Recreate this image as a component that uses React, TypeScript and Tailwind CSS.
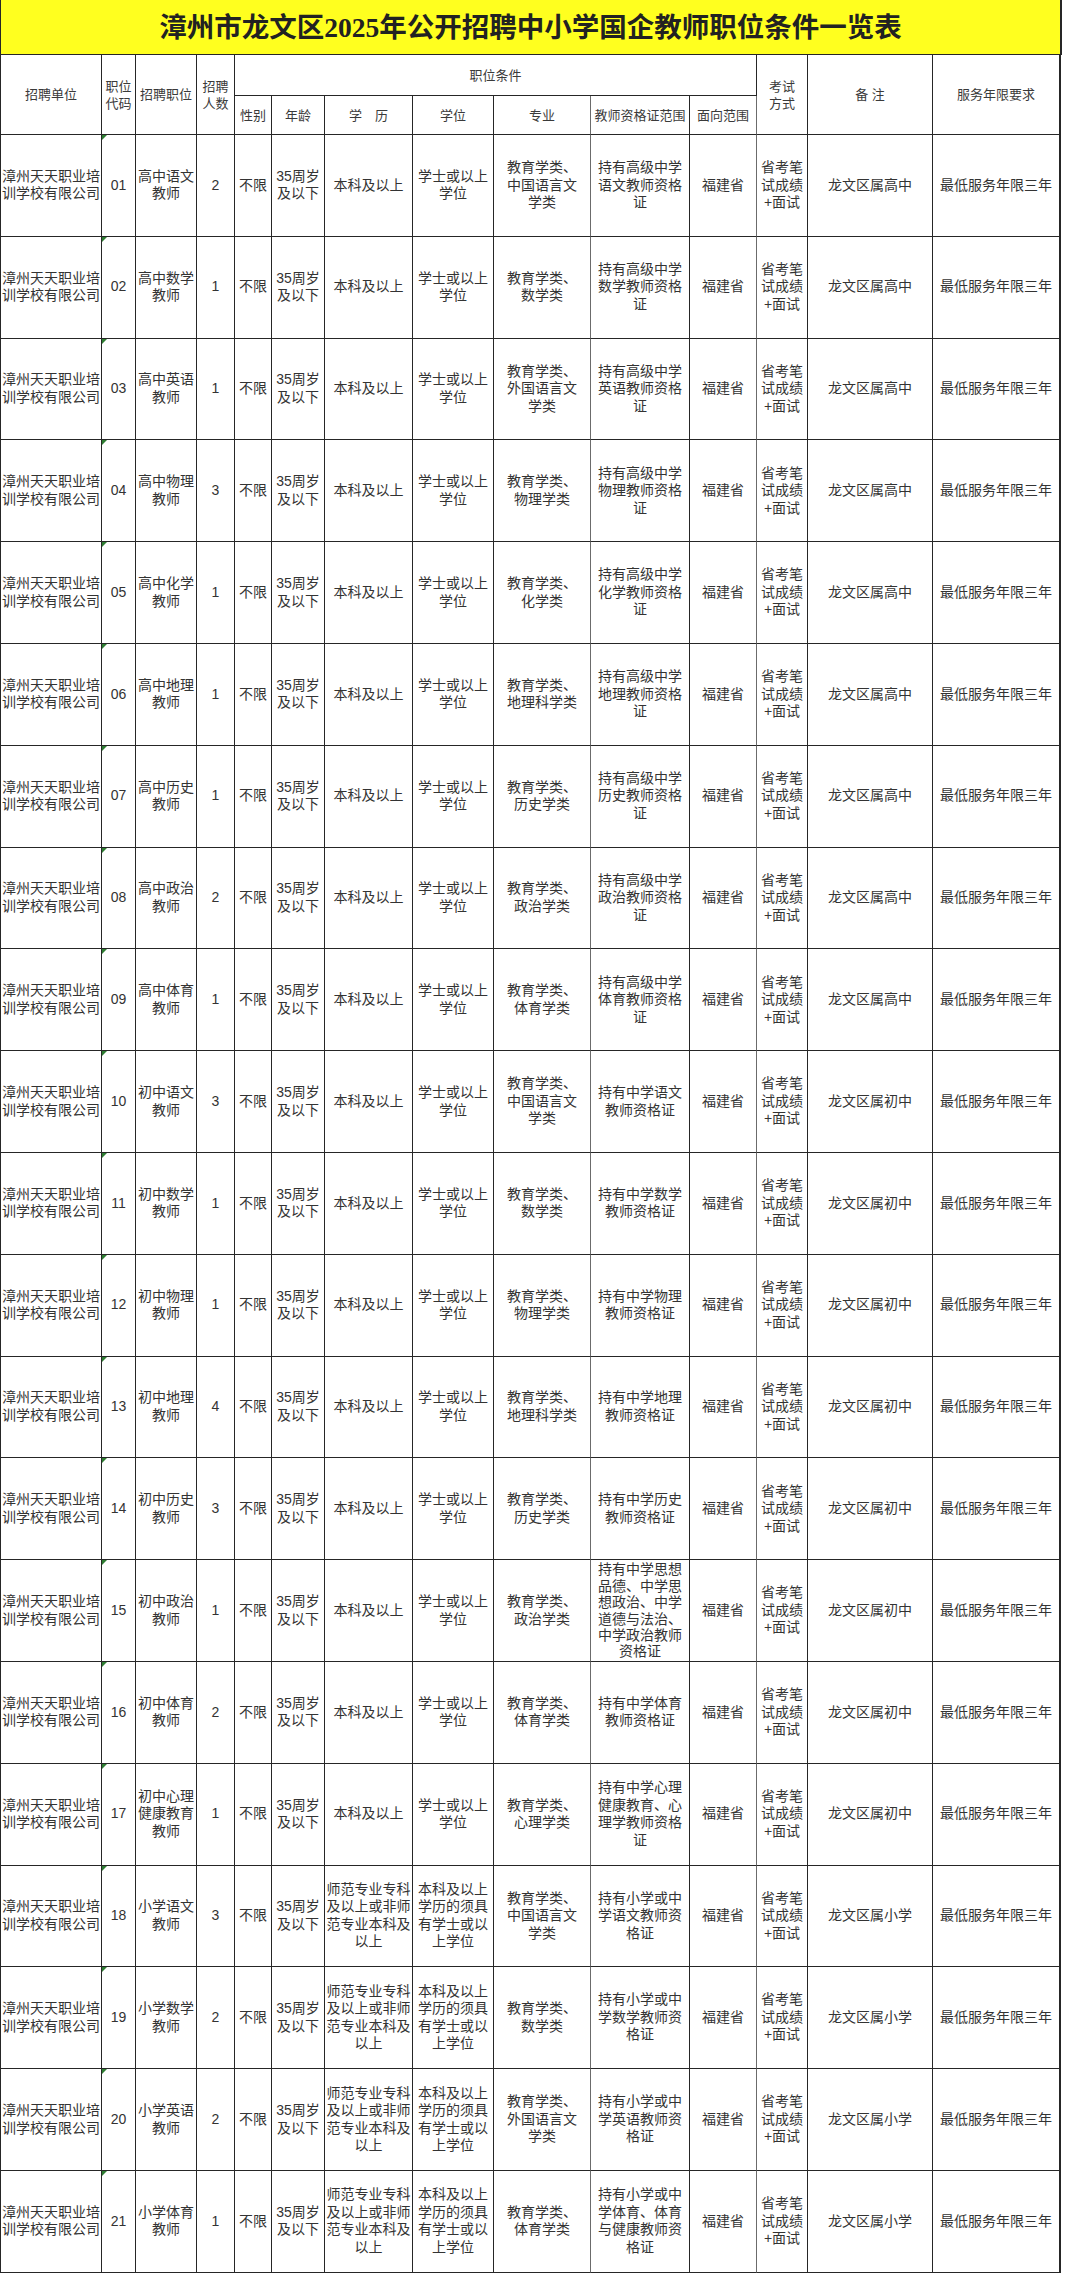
import { ReactNode } from 'react';
import clsx from 'clsx';

// ─────────────────────────────────────────────────────────────────────────────
// 数据
// ─────────────────────────────────────────────────────────────────────────────

interface Job {
  code: string;
  position: string;
  count: number;
  major: string;
  cert: string;
  note: string;
  primary?: boolean;
}

const UNIT = '漳州天天职业培\n训学校有限公司';
const EXAM = '省考笔\n试成绩\n+面试';

const MAJOR = {
  chinese: '教育学类、\n中国语言文\n学类',
  math: '教育学类、\n数学类',
  english: '教育学类、\n外国语言文\n学类',
  physics: '教育学类、\n物理学类',
  chemistry: '教育学类、\n化学类',
  geo: '教育学类、\n地理科学类',
  history: '教育学类、\n历史学类',
  politics: '教育学类、\n政治学类',
  pe: '教育学类、\n体育学类',
  psy: '教育学类、\n心理学类',
};

const high = (s: string) => `持有高级中学\n${s}教师资格\n证`;
const middle = (s: string) => `持有中学${s}\n教师资格证`;
const primary = (s: string) => `持有小学或中\n学${s}教师资\n格证`;

const jobs: Job[] = [
  { code: '01', position: '高中语文\n教师', count: 2, major: MAJOR.chinese, cert: high('语文'), note: '龙文区属高中' },
  { code: '02', position: '高中数学\n教师', count: 1, major: MAJOR.math, cert: high('数学'), note: '龙文区属高中' },
  { code: '03', position: '高中英语\n教师', count: 1, major: MAJOR.english, cert: high('英语'), note: '龙文区属高中' },
  { code: '04', position: '高中物理\n教师', count: 3, major: MAJOR.physics, cert: high('物理'), note: '龙文区属高中' },
  { code: '05', position: '高中化学\n教师', count: 1, major: MAJOR.chemistry, cert: high('化学'), note: '龙文区属高中' },
  { code: '06', position: '高中地理\n教师', count: 1, major: MAJOR.geo, cert: high('地理'), note: '龙文区属高中' },
  { code: '07', position: '高中历史\n教师', count: 1, major: MAJOR.history, cert: high('历史'), note: '龙文区属高中' },
  { code: '08', position: '高中政治\n教师', count: 2, major: MAJOR.politics, cert: high('政治'), note: '龙文区属高中' },
  { code: '09', position: '高中体育\n教师', count: 1, major: MAJOR.pe, cert: high('体育'), note: '龙文区属高中' },
  { code: '10', position: '初中语文\n教师', count: 3, major: MAJOR.chinese, cert: middle('语文'), note: '龙文区属初中' },
  { code: '11', position: '初中数学\n教师', count: 1, major: MAJOR.math, cert: middle('数学'), note: '龙文区属初中' },
  { code: '12', position: '初中物理\n教师', count: 1, major: MAJOR.physics, cert: middle('物理'), note: '龙文区属初中' },
  { code: '13', position: '初中地理\n教师', count: 4, major: MAJOR.geo, cert: middle('地理'), note: '龙文区属初中' },
  { code: '14', position: '初中历史\n教师', count: 3, major: MAJOR.history, cert: middle('历史'), note: '龙文区属初中' },
  {
    code: '15',
    position: '初中政治\n教师',
    count: 1,
    major: MAJOR.politics,
    cert: '持有中学思想\n品德、中学思\n想政治、中学\n道德与法治、\n中学政治教师\n资格证',
    note: '龙文区属初中',
  },
  { code: '16', position: '初中体育\n教师', count: 2, major: MAJOR.pe, cert: middle('体育'), note: '龙文区属初中' },
  {
    code: '17',
    position: '初中心理\n健康教育\n教师',
    count: 1,
    major: MAJOR.psy,
    cert: '持有中学心理\n健康教育、心\n理学教师资格\n证',
    note: '龙文区属初中',
  },
  { code: '18', position: '小学语文\n教师', count: 3, major: MAJOR.chinese, cert: primary('语文'), note: '龙文区属小学', primary: true },
  { code: '19', position: '小学数学\n教师', count: 2, major: MAJOR.math, cert: primary('数学'), note: '龙文区属小学', primary: true },
  { code: '20', position: '小学英语\n教师', count: 2, major: MAJOR.english, cert: primary('英语'), note: '龙文区属小学', primary: true },
  {
    code: '21',
    position: '小学体育\n教师',
    count: 1,
    major: MAJOR.pe,
    cert: '持有小学或中\n学体育、体育\n与健康教师资\n格证',
    note: '龙文区属小学',
    primary: true,
  },
];

// ─────────────────────────────────────────────────────────────────────────────
// 单元格
// ─────────────────────────────────────────────────────────────────────────────

function Cell({ children, className }: { children?: ReactNode; className?: string }) {
  return (
    <div
      className={clsx(
        'relative flex items-center justify-center overflow-hidden text-center whitespace-pre-line',
        'border-r border-b border-[#262626]',
        className
      )}
    >
      {children}
    </div>
  );
}

// Excel 的“以文本形式存储的数字”绿色小三角
function GreenMark() {
  return (
    <span className="absolute top-0 left-0 h-0 w-0 border-t-[5px] border-r-[5px] border-t-[#2e7d32] border-r-transparent" />
  );
}

const COLS =
  'grid grid-cols-[101px_34px_61px_38px_37px_53px_88px_81px_97px_99px_67px_51px_125px_128px]';

// ─────────────────────────────────────────────────────────────────────────────
// 页面
// ─────────────────────────────────────────────────────────────────────────────

export default function App() {
  return (
    <div className="min-h-[2275px] w-[1080px] bg-white">
      <div className="w-[1062px] border-l border-[#262626]">
        {/* 标题 */}
        <div className="flex h-[55px] items-center justify-center border-r-2 border-b border-[#262626] bg-[#ffff1f]">
          <h1 className="font-['Liberation_Serif','Noto_Sans_CJK_SC',serif] text-[27.5px] font-bold leading-none text-[#222] pt-[2px]">
            漳州市龙文区2025年公开招聘中小学国企教师职位条件一览表
          </h1>
        </div>

        {/* 表头 */}
        <div
          className={clsx(
            COLS,
            "grid-rows-[41px_39px] font-['Liberation_Sans','Noto_Sans_CJK_SC',sans-serif] text-[13px] leading-[17px] text-[#3a3a3a]"
          )}
        >
          <Cell className="row-span-2">招聘单位</Cell>
          <Cell className="row-span-2">{'职位\n代码'}</Cell>
          <Cell className="row-span-2">招聘职位</Cell>
          <Cell className="row-span-2">{'招聘\n人数'}</Cell>
          <Cell className="col-span-7">职位条件</Cell>
          <Cell className="row-span-2 border-[#6b6b6b] border-b-[#262626]">{'考试\n方式'}</Cell>
          <Cell className="row-span-2">备 注</Cell>
          <Cell className="row-span-2 border-r-2">服务年限要求</Cell>
          <Cell>性别</Cell>
          <Cell>年龄</Cell>
          <Cell>学　历</Cell>
          <Cell>学位</Cell>
          <Cell className="border-r-[#6b6b6b]">专业</Cell>
          <Cell>教师资格证范围</Cell>
          <Cell className="border-r-[#6b6b6b]">面向范围</Cell>
        </div>

        {/* 数据行 */}
        <div
          className={clsx(
            COLS,
            "auto-rows-[101.8px] font-['Liberation_Sans','Noto_Sans_CJK_SC',sans-serif] text-[14px] leading-[17.5px] text-[#333]"
          )}
        >
          {jobs.map((job) => (
            <Row key={job.code} job={job} />
          ))}
        </div>
      </div>
    </div>
  );
}

function Row({ job }: { job: Job }) {
  // 六行的资格证文字要压一点行距才能放得下
  const tight = job.cert.split('\n').length > 5;

  return (
    <>
      <Cell>{UNIT}</Cell>
      <Cell>
        <GreenMark />
        {job.code}
      </Cell>
      <Cell>{job.position}</Cell>
      <Cell>{job.count}</Cell>
      <Cell>不限</Cell>
      <Cell>{'35周岁\n及以下'}</Cell>
      <Cell>{job.primary ? '师范专业专科\n及以上或非师\n范专业本科及\n以上' : '本科及以上'}</Cell>
      <Cell>{job.primary ? '本科及以上\n学历的须具\n有学士或以\n上学位' : '学士或以上\n学位'}</Cell>
      <Cell className="border-r-[#6b6b6b]">{job.major}</Cell>
      <Cell className={clsx(tight && 'leading-[16.4px]')}>{job.cert}</Cell>
      <Cell className="border-r-[#6b6b6b]">福建省</Cell>
      <Cell>{EXAM}</Cell>
      <Cell>{job.note}</Cell>
      <Cell className="border-r-2">最低服务年限三年</Cell>
    </>
  );
}
